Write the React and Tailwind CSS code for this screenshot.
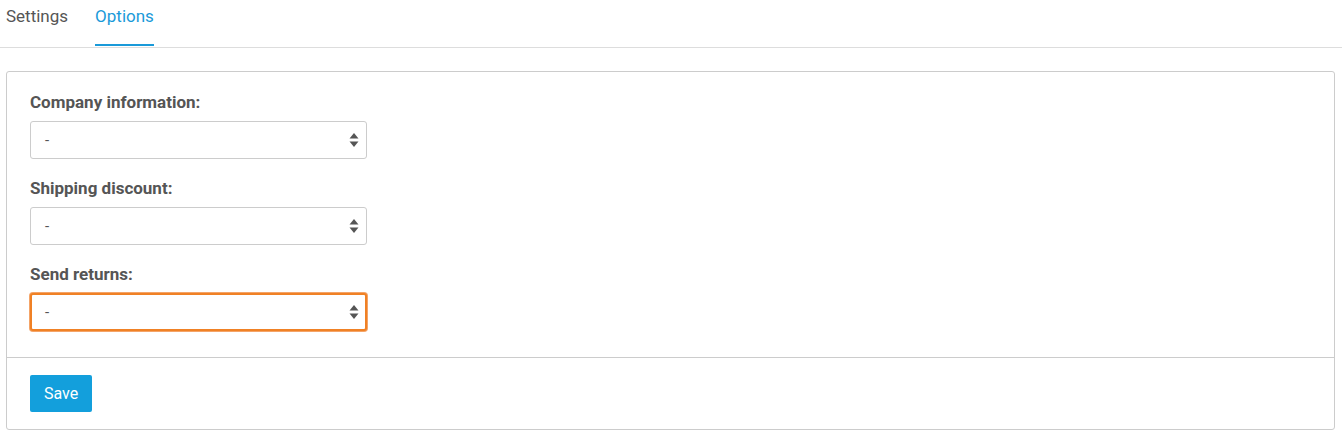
const ArrowsIcon = () => (
  <svg width="10" height="16" viewBox="0 0 10 16" className="text-[#555]">
    <path d="M5 1 L9.5 6.5 H0.5 Z" fill="currentColor" />
    <path d="M5 15 L9.5 9.5 H0.5 Z" fill="currentColor" />
  </svg>
);

const SelectField = ({ label, focused }) => (
  <div className="flex flex-col">
    <label className="text-[17px] leading-[20px] font-bold text-[#555] mb-[9px]">{label}</label>
    <div
      className={
        focused
          ? "w-[337px] h-[38px] flex items-center justify-between pl-[13px] pr-[6px] border-2 border-[#f08125] shadow-[0_0_0_1px_#f4a468] rounded-[3px] bg-white"
          : "w-[337px] h-[38px] flex items-center justify-between pl-[14px] pr-[7px] border border-[#ccc] rounded-[3px] bg-white"
      }
    >
      <span className="text-[15px] text-[#555]">-</span>
      <ArrowsIcon />
    </div>
  </div>
);

export default function App() {
  return (
    <div className="w-[1342px] h-[437px] bg-white font-['Roboto',sans-serif]">
      {/* Tabs */}
      <div className="flex h-[48px] border-b border-[#ddd]">
        <div className="pl-[6px] pr-[27px] pt-[6px] text-[17px] leading-[20px] text-[#555]">Settings</div>
        <div className="relative pt-[6px] text-[17px] leading-[20px] text-[#1a9ad9]">
          Options
          <div className="absolute left-0 right-0 bottom-[1px] h-[2px] bg-[#1a9ad9]" />
        </div>
      </div>

      {/* Card */}
      <div className="mx-[6px] mt-[23px] w-[1329px] border border-[#ccc] rounded-[3px]">
        <div className="flex flex-col gap-[19px] pl-[23px] pt-[20px] pb-[26px]">
          <SelectField label="Company information:" />
          <SelectField label="Shipping discount:" />
          <SelectField label="Send returns:" focused />
        </div>
        <div className="border-t border-[#ccc] pl-[23px] pt-[17px] pb-[17px]">
          <button className="w-[62px] h-[37px] bg-[#139fdc] text-white text-[16px] rounded-[2px]">Save</button>
        </div>
      </div>
    </div>
  );
}
